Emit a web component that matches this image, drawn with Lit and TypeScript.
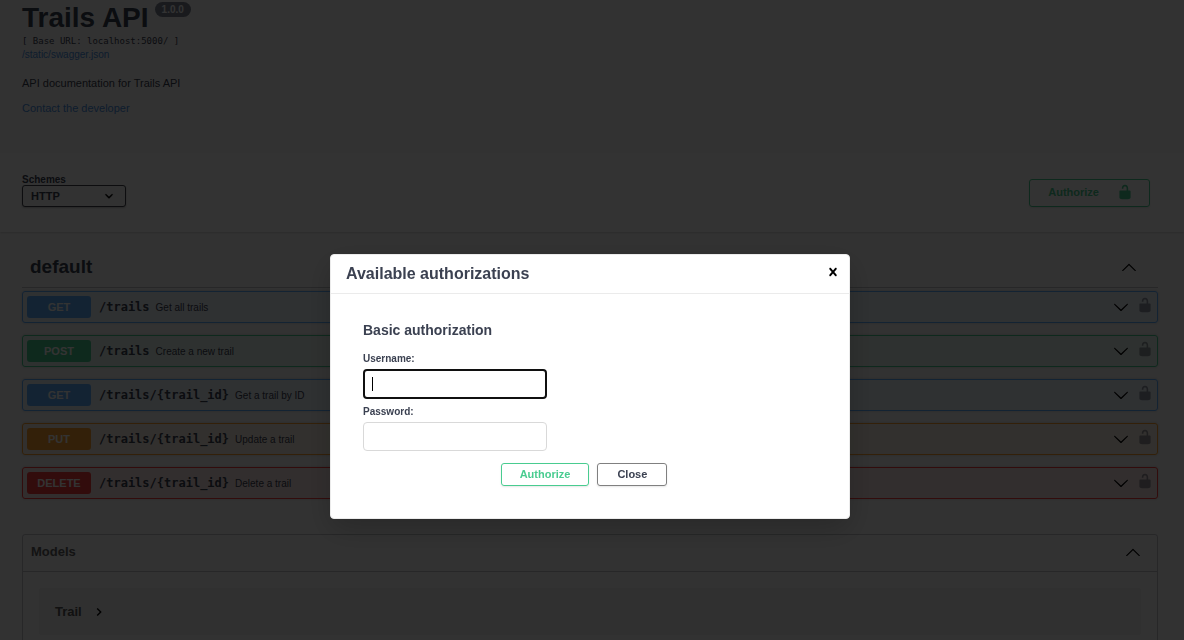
import { LitElement, html, css, svg } from "lit";
import { customElement, property, query } from "lit/decorators.js";
import { classMap } from "lit/directives/class-map.js";

const ICONS: Record<string, string> = {
  unlocked:
    "M15.8 8H14V5.6C14 2.703 12.665 1 10 1 7.334 1 6 2.703 6 5.6V6h2v-.801C8 3.754 8.797 3 10 3c1.203 0 2 .754 2 2.199V8H4c-.553 0-1 .646-1 1.199V17c0 .549.428 1.139.951 1.307l1.197.387C5.672 18.861 6.55 19 7.1 19h5.8c.549 0 1.428-.139 1.951-.307l1.196-.387c.524-.167.953-.757.953-1.306V9.199C17 8.646 16.352 8 15.8 8z",
  down: "M17.418 6.109c.272-.268.709-.268.979 0s.271.701 0 .969l-7.908 7.83c-.27.268-.707.268-.979 0l-7.908-7.83c-.27-.268-.27-.701 0-.969.271-.268.709-.268.979 0L10 13.25l7.418-7.141z",
  up: "M17.418 14.908c.272.268.709.268.979 0s.271-.701 0-.969l-7.908-7.83c-.27-.268-.707-.268-.979 0l-7.908 7.83c-.27.268-.27.701 0 .969.271.268.709.268.979 0L10 7.767l7.418 7.141z",
  close:
    "M14.348 14.849c-.469.469-1.229.469-1.697 0L10 11.819l-2.651 3.029c-.469.469-1.229.469-1.697 0-.469-.469-.469-1.229 0-1.697l2.758-3.15-2.759-3.152c-.469-.469-.469-1.228 0-1.697.469-.469 1.228-.469 1.697 0L10 8.183l2.651-3.031c.469-.469 1.228-.469 1.697 0 .469.469.469 1.229 0 1.697l-2.758 3.152 2.758 3.15c.469.469.469 1.229 0 1.698z",
  right: "M8.333 5L7.158 6.175 10.975 10l-3.817 3.825L8.333 15l5-5z",
};

const icon = (name: string) => html`<svg
  class="icon"
  viewBox="0 0 20 20"
  width="16"
  height="16"
  aria-hidden="true"
>
  ${svg`<path d=${ICONS[name]} fill="currentColor"></path>`}
</svg>`;

const shared = css`
  * {
    box-sizing: border-box;
  }
  button,
  input,
  select {
    font-family: inherit;
    color: inherit;
    margin: 0;
  }
  h1,
  h2,
  h3,
  h4,
  p {
    margin: 0;
  }
  a {
    color: #4990e2;
    text-decoration: none;
  }
  .icon {
    display: block;
    flex: none;
  }
  .plain {
    border: 0;
    background: none;
    padding: 0;
    cursor: pointer;
  }
  .btn {
    border: 1px solid #808080;
    border-radius: 3px;
    background: transparent;
    font-size: 11px;
    line-height: 13px;
    font-weight: 700;
    box-shadow: 0 1px 2px rgba(0, 0, 0, 0.1);
    cursor: pointer;
  }
  .btn.green {
    color: #49cc90;
    border-color: #49cc90;
  }
`;

interface Operation {
  method: string;
  path: string;
  summary: string;
}

@customElement("api-operation")
export class ApiOperation extends LitElement {
  @property({ attribute: false }) op!: Operation;

  static styles = [
    shared,
    css`
      :host {
        display: block;
      }
      .row {
        display: flex;
        align-items: center;
        height: 32px;
        padding: 0 4px;
        border: 1px solid;
        border-radius: 3px;
        box-shadow: 0 0 3px rgba(0, 0, 0, 0.19);
      }
      .summary {
        display: flex;
        flex: 1;
        align-items: center;
        gap: 8px;
        text-align: left;
        padding-right: 8px;
      }
      .method {
        width: 64px;
        line-height: 22px;
        border-radius: 3px;
        color: #fff;
        font-size: 11px;
        font-weight: 700;
        text-align: center;
      }
      .label {
        display: flex;
        flex: 1;
        align-items: center;
        gap: 6px;
      }
      .path {
        font-family: "DejaVu Sans Mono", monospace;
        font-size: 12px;
        font-weight: 700;
      }
      .text {
        font-size: 10px;
      }
      .lock {
        opacity: 0.5;
        padding-bottom: 4px;
      }
      .chevron {
        color: #000;
      }
      .get {
        border-color: #61affe;
        background: rgba(97, 175, 254, 0.1);
      }
      .get .method {
        background: #61affe;
      }
      .post {
        border-color: #49cc90;
        background: rgba(73, 204, 144, 0.1);
      }
      .post .method {
        background: #49cc90;
      }
      .put {
        border-color: #fca130;
        background: rgba(252, 161, 48, 0.1);
      }
      .put .method {
        background: #fca130;
      }
      .delete {
        border-color: #f93e3e;
        background: rgba(249, 62, 62, 0.1);
      }
      .delete .method {
        background: #f93e3e;
      }
    `,
  ];

  render() {
    const { method, path, summary } = this.op;
    return html`<div class=${classMap({ row: true, [method.toLowerCase()]: true })}>
      <button class="plain summary">
        <span class="method">${method}</span>
        <span class="label">
          <span class="path">${path}</span>
          <span class="text">${summary}</span>
        </span>
        <span class="chevron">${icon("down")}</span>
      </button>
      <button class="plain lock" aria-label="authorization button unlocked">
        ${icon("unlocked")}
      </button>
    </div>`;
  }
}

@customElement("auth-dialog")
export class AuthDialog extends LitElement {
  @query("#username") username!: HTMLInputElement;

  static styles = [
    shared,
    css`
      :host {
        display: block;
      }
      .dialog {
        width: 520px;
        max-width: 100%;
        background: #fff;
        border: 1px solid #ebebeb;
        border-radius: 4px;
        box-shadow: 0 10px 30px rgba(0, 0, 0, 0.2);
      }
      .head {
        display: flex;
        align-items: flex-start;
        justify-content: space-between;
        padding: 8px 8px 8px 15px;
        border-bottom: 1px solid #ebebeb;
      }
      .head h3 {
        font-size: 16px;
        line-height: 22px;
      }
      .close {
        color: #000;
        padding-top: 1px;
      }
      .body {
        padding: 28px 32px 32px;
      }
      .body h4 {
        font-size: 14px;
        line-height: 16px;
        margin-bottom: 15px;
      }
      .field {
        display: flex;
        flex-direction: column;
        align-items: flex-start;
        gap: 4px;
        margin-bottom: 7px;
      }
      .field label {
        font-size: 10px;
        line-height: 12px;
        font-weight: 700;
      }
      .field input {
        width: 184px;
        height: 29px;
        padding: 0 8px;
        border: 1px solid #d9d9d9;
        border-radius: 4px;
        background: #fff;
        font-size: 11px;
        outline: none;
      }
      .field input.active {
        height: 30px;
        border: 2px solid #101010;
        caret-color: transparent;
        background: linear-gradient(#000, #000) 7px center / 1px 14px no-repeat #fff;
      }
      .actions {
        display: flex;
        justify-content: center;
        gap: 8px;
        padding: 5px 12px 0 0;
      }
      .actions .btn {
        min-width: 70px;
        padding: 4px 18px;
      }
    `,
  ];

  firstUpdated() {
    this.username.focus();
  }

  render() {
    return html`<div class="dialog" role="dialog" aria-labelledby="title">
      <div class="head">
        <h3 id="title">Available authorizations</h3>
        <button class="plain close" aria-label="Close dialog">${icon("close")}</button>
      </div>
      <form class="body" @submit=${(e: Event) => e.preventDefault()}>
        <h4>Basic authorization</h4>
        <div class="field">
          <label for="username">Username:</label>
          <input id="username" class="active" type="text" autocomplete="off" />
        </div>
        <div class="field">
          <label for="password">Password:</label>
          <input id="password" type="password" autocomplete="off" />
        </div>
        <div class="actions">
          <button class="btn green" type="submit">Authorize</button>
          <button class="btn" type="button">Close</button>
        </div>
      </form>
    </div>`;
  }
}

@customElement("app-root")
export class AppRoot extends LitElement {
  private operations: Operation[] = [
    { method: "GET", path: "/trails", summary: "Get all trails" },
    { method: "POST", path: "/trails", summary: "Create a new trail" },
    { method: "GET", path: "/trails/{trail_id}", summary: "Get a trail by ID" },
    { method: "PUT", path: "/trails/{trail_id}", summary: "Update a trail" },
    { method: "DELETE", path: "/trails/{trail_id}", summary: "Delete a trail" },
  ];

  static styles = [
    shared,
    css`
      :host {
        display: block;
        height: 100vh;
        overflow: hidden;
        background: #fafafa;
        color: #3b4151;
        font-family: "Liberation Sans", Arial, sans-serif;
      }
      .wrap {
        padding: 0 26px 0 22px;
      }
      .info {
        padding-bottom: 38px;
      }
      .title {
        display: flex;
        align-items: flex-start;
        gap: 6px;
        font-size: 28px;
        line-height: 35px;
      }
      .version {
        margin-top: 2px;
        padding: 0 7px;
        border-radius: 8px;
        background: #7d8492;
        color: #fff;
        font-size: 10px;
        line-height: 15px;
      }
      .base {
        font-family: "DejaVu Sans Mono", monospace;
        font-size: 9px;
        line-height: 13px;
      }
      .spec {
        display: block;
        font-size: 10px;
        line-height: 14px;
      }
      .about {
        font-size: 11px;
        line-height: 13px;
        margin: 15px 0 12px;
      }
      .contact {
        display: block;
        font-size: 11px;
        line-height: 13px;
      }
      .schemes {
        display: flex;
        justify-content: space-between;
        align-items: flex-end;
        padding-top: 21px;
        padding-bottom: 25px;
        padding-right: 34px;
        background: #fff;
        box-shadow: 0 1px 2px rgba(0, 0, 0, 0.15);
      }
      .scheme {
        display: flex;
        flex-direction: column;
        font-size: 10px;
        line-height: 11px;
        font-weight: 700;
      }
      .scheme select {
        appearance: none;
        width: 104px;
        height: 22px;
        padding: 0 8px;
        border: 1px solid #41444e;
        border-radius: 3px;
        font-size: 11px;
        font-weight: 700;
        box-shadow: 0 1px 2px rgba(0, 0, 0, 0.25);
        background: #f7f7f7
          url('data:image/svg+xml;utf8,<svg xmlns="http://www.w3.org/2000/svg" viewBox="0 0 20 20"><path d="M13.418 7.859c.271-.268.709-.268.978 0 .27.268.272.701 0 .969l-3.908 3.83c-.27.268-.707.268-.979 0l-3.908-3.83c-.27-.267-.27-.701 0-.969.271-.268.709-.268.978 0L10 11l3.418-3.141z" stroke="black" stroke-width=".4"/></svg>')
          right 8px center / 16px 16px no-repeat;
      }
      .authorize {
        display: flex;
        align-items: center;
        gap: 18px;
        padding: 4px 16px 6px 18px;
      }
      .tag {
        display: flex;
        justify-content: space-between;
        align-items: center;
        width: 100%;
        padding: 8px 21px 8px 8px;
        border-bottom: 1px solid rgba(59, 65, 81, 0.3);
        font-size: 19px;
        line-height: 24px;
        font-weight: 700;
      }
      .tag-block {
        padding-top: 15px;
      }
      .ops {
        display: flex;
        flex-direction: column;
        gap: 12px;
        padding-top: 3px;
      }
      .dark {
        color: #000;
      }
      .models {
        margin-top: 35px;
        border: 1px solid rgba(59, 65, 81, 0.3);
        border-radius: 3px;
      }
      .models-head {
        display: flex;
        justify-content: space-between;
        align-items: center;
        width: 100%;
        padding: 9px 16px 11px 8px;
        border-bottom: 1px solid rgba(59, 65, 81, 0.3);
        color: #606060;
        font-size: 13px;
        line-height: 16px;
        font-weight: 700;
      }
      .model {
        margin: 16px;
        padding: 16px 16px 15px;
        border-radius: 3px;
        background: #ededed;
      }
      .model button {
        display: flex;
        align-items: center;
        gap: 9px;
        color: #555;
        font-size: 13px;
        line-height: 16px;
        font-weight: 700;
      }
      .backdrop {
        position: fixed;
        inset: 0;
        display: flex;
        justify-content: center;
        align-items: flex-start;
        padding: 254px 4px 0 0;
        background: rgba(0, 0, 0, 0.8);
      }
    `,
  ];

  render() {
    return html`
      <main>
        <header class="wrap info">
          <h1 class="title">Trails API <span class="version">1.0.0</span></h1>
          <p class="base">[ Base URL: localhost:5000/ ]</p>
          <a class="spec" href="/static/swagger.json">/static/swagger.json</a>
          <p class="about">API documentation for Trails API</p>
          <a class="contact" href="#contact">Contact the developer</a>
        </header>
        <section class="wrap schemes">
          <div class="scheme">
            <label for="scheme">Schemes</label>
            <select id="scheme">
              <option>HTTP</option>
            </select>
          </div>
          <button class="btn green authorize">Authorize ${icon("unlocked")}</button>
        </section>
        <section class="wrap tag-block">
          <button class="plain tag">
            default <span class="dark">${icon("up")}</span>
          </button>
          <div class="ops">
            ${this.operations.map((op) => html`<api-operation .op=${op}></api-operation>`)}
          </div>
          <div class="models">
            <button class="plain models-head">
              Models <span class="dark">${icon("up")}</span>
            </button>
            <div class="model">
              <button class="plain">
                Trail <span class="dark">${icon("right")}</span>
              </button>
            </div>
          </div>
        </section>
      </main>
      <div class="backdrop"><auth-dialog></auth-dialog></div>
    `;
  }
}
